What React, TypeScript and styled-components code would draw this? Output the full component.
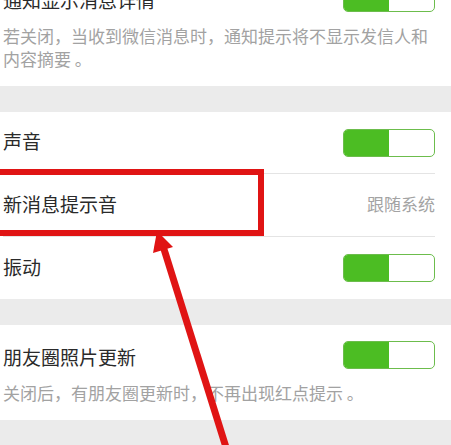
import React from 'react';
import styled, {createGlobalStyle} from 'styled-components';

const GlobalStyle = createGlobalStyle`
  html, body {
    margin: 0;
    padding: 0;
    background: #ebebeb;
  }
  #root {
    height: 445px;
    overflow: hidden;
  }
`;

const Page = styled.div`
  position: relative;
  width: 451px;
  height: 445px;
  overflow: hidden;
  font-family: 'Noto Sans CJK SC', 'Noto Sans', sans-serif;
  background: #ebebeb;
`;

const Section = styled.div<{$first?: boolean}>`
  background: #ffffff;
  margin-top: ${p => (p.$first ? '-32px' : '26px')};
`;

const DescSection = styled.div`
  padding: 16px 16px 16px 3px;
`;

const HeaderRow = styled.div`
  display: flex;
  align-items: center;
  justify-content: space-between;
  height: 28px;
`;

const Row = styled.div<{$height: number}>`
  position: relative;
  display: flex;
  align-items: center;
  justify-content: space-between;
  height: ${p => p.$height}px;
  padding: 0 16px 0 3px;
`;

const Separator = styled.div`
  height: 1px;
  margin: 0 16px 0 3px;
  background: #e4e4e4;
`;

const Title = styled.span<{$raise?: boolean}>`
  font-size: 19px;
  color: #2a2a2a;
  line-height: 28px;
  padding-top: ${p => (p.$raise ? '0' : '3px')};
  margin-bottom: ${p => (p.$raise ? '3px' : '0')};
`;

const Value = styled.span`
  font-size: 17px;
  color: #a3a3a3;
  margin-bottom: 4px;
`;

const Desc = styled.div`
  margin-top: 12px;
  font-size: 17px;
  line-height: 23px;
  color: #a2a2a2;
`;

const SwitchBox = styled.div`
  box-sizing: border-box;
  display: flex;
  width: 92px;
  height: 28px;
  border: 1.5px solid #6cbd4c;
  border-radius: 5px;
  overflow: hidden;
  background: #ffffff;
`;

const SwitchOn = styled.div`
  width: 45px;
  background: #4cbd23;
`;

const Highlight = styled.div`
  position: absolute;
  left: -12px;
  top: -5px;
  width: 276px;
  height: 67px;
  box-sizing: border-box;
  border: 6px solid #e01414;
`;

const ArrowLayer = styled.svg`
  position: absolute;
  left: 0;
  top: 0;
  pointer-events: none;
`;

const Switch = () => (
  <SwitchBox>
    <SwitchOn />
  </SwitchBox>
);

const App = () => (
  <Page>
    <GlobalStyle />
    <Section $first>
      <DescSection>
        <HeaderRow>
          <Title>通知显示消息详情</Title>
          <Switch />
        </HeaderRow>
        <Desc>若关闭，当收到微信消息时，通知提示将不显示发信人和内容摘要 。</Desc>
      </DescSection>
    </Section>

    <Section>
      <Row $height={61}>
        <Title $raise>声音</Title>
        <Switch />
      </Row>
      <Separator />
      <Row $height={62}>
        <Title $raise>新消息提示音</Title>
        <Value>跟随系统</Value>
        <Highlight />
      </Row>
      <Separator />
      <Row $height={62}>
        <Title $raise>振动</Title>
        <Switch />
      </Row>
    </Section>

    <Section>
      <DescSection>
        <HeaderRow>
          <Title>朋友圈照片更新</Title>
          <Switch />
        </HeaderRow>
        <Desc>关闭后，有朋友圈更新时，不再出现红点提示 。</Desc>
      </DescSection>
    </Section>

    <ArrowLayer width="451" height="445" viewBox="0 0 451 445">
      <line x1="163" y1="246" x2="230" y2="460" stroke="#e01414" strokeWidth="7" />
      <polygon points="157,231 173,247 153,253" fill="#e01414" />
    </ArrowLayer>
  </Page>
);

export default App;
